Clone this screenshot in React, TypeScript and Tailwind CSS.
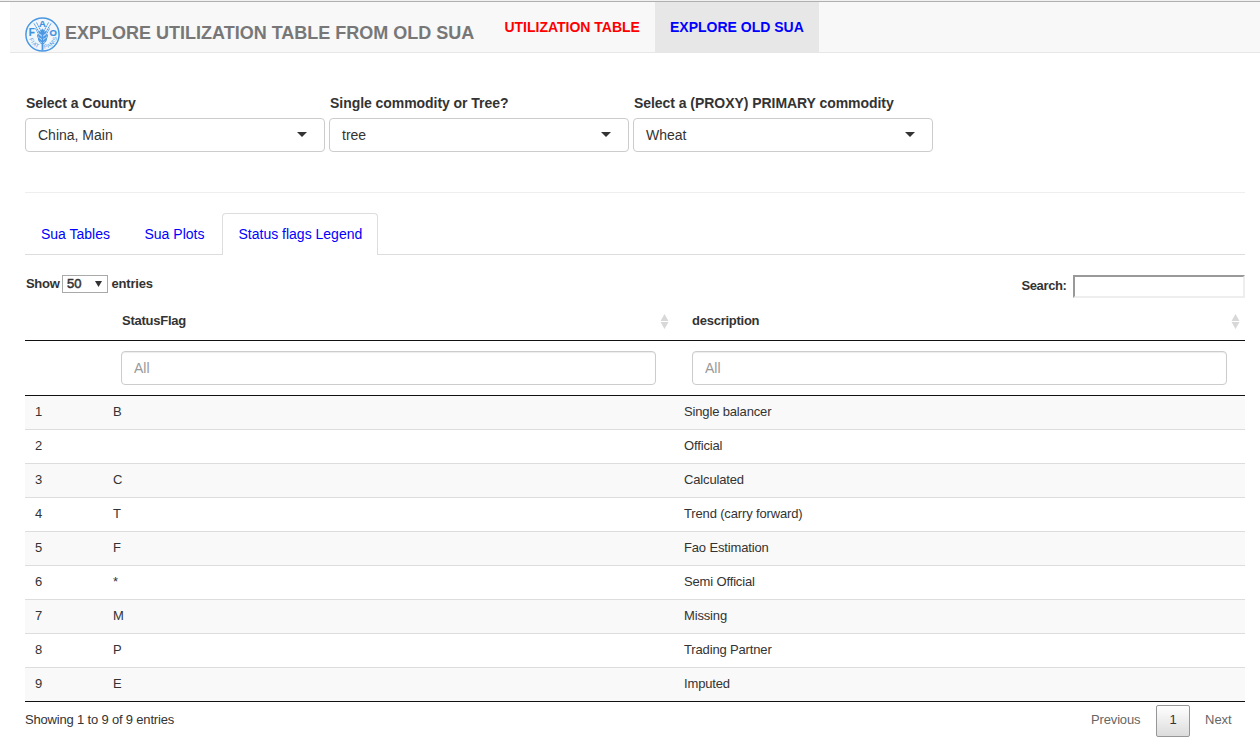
const rows: [string, string][] = [
  ['B', 'Single balancer'],
  ['', 'Official'],
  ['C', 'Calculated'],
  ['T', 'Trend (carry forward)'],
  ['F', 'Fao Estimation'],
  ['*', 'Semi Official'],
  ['M', 'Missing'],
  ['P', 'Trading Partner'],
  ['E', 'Imputed'],
];

const selects: [string, string][] = [
  ['Select a Country', 'China, Main'],
  ['Single commodity or Tree?', 'tree'],
  ['Select a (PROXY) PRIMARY commodity', 'Wheat'],
];

function Logo() {
  return (
    <svg width="36" height="36" viewBox="-0.500 -0.500 36 36" className="shrink-0 overflow-visible" fill="none" stroke="#4a98e3">
      <defs>
        <path id="motto-left" d="M4.600 22.500A14.200 14.200 0 0 0 16.500 32.200" />
        <path id="motto-right" d="M19.800 32.200A14.200 14.200 0 0 0 32.500 21" />
      </defs>
      <circle cx="18" cy="18" r="16.6" strokeWidth="1.5" fill="#f1f6fb" />
      <g strokeWidth="1">
        <path d="M9.500 7L15.500 17M12 6L16.500 14.500M26.500 7L20.500 17M24 6L19.500 14.500M11 12L14.500 18.500M25 12L21.500 18.500" strokeDasharray="1.6 .4" />
        <path d="M13 18C13 22 15 24 17 24.500M23 18C23 22 21 24 19 24.500M14 22C14 25 16 27 18 27.500C20 27 22 25 22 22" />
      </g>
      <path d="M18 12.500C15.500 14 15.500 16 18 18C20.500 16 20.500 14 18 12.500ZM17.500 18.500C14.500 17.500 14 15.500 14.300 14.500C16 15.500 17.500 16.500 17.500 18.500ZM18.500 18.500C21.500 17.500 22 15.500 21.700 14.500C20 15.500 18.500 16.500 18.500 18.500ZM17.500 22C14.500 21.500 13.500 19.500 13.700 18C16 19 17.500 20 17.500 22ZM18.500 22C21.500 21.500 22.500 19.500 22.300 18C20 19 18.500 20 18.500 22ZM17.500 25.500C15 25 13.800 23 14 21.500C16 22.500 17.500 23.500 17.500 25.500ZM18.500 25.500C21 25 22.200 23 22 21.500C20 22.500 18.500 23.500 18.500 25.500Z" fill="#4a98e3" strokeWidth="0.5" />
      <path d="M18 17V34" strokeWidth="1.8" />
      <g fill="#3f91e0" stroke="#3f91e0" strokeWidth="0.2" fontFamily="Liberation Sans, sans-serif" fontWeight="bold" textAnchor="middle">
        <text x="7.2" y="19.200" className="text-[10px]">F</text>
        <text x="18" y="10.500" className="text-[9.5px]">A</text>
        <text x="28.7" y="19" className="text-[9.5px]">O</text>
      </g>
      <g fill="#4a98e3" stroke="none" fontFamily="Liberation Sans, sans-serif" className="text-[5.5px] tracking-[0.5px]">
        <text><textPath href="#motto-left">FIAT</textPath></text>
        <text><textPath href="#motto-right">PANIS</textPath></text>
      </g>
    </svg>
  );
}

function SortIcon() {
  return (
    <svg width="9" height="15" viewBox="0 0 9 15" fill="#d8d8d8" className="mt-0.5">
      <path d="M4.500 0L8.500 7H.5ZM4.500 15L8.500 8H.5Z" />
    </svg>
  );
}

function Header({ label }: { label: string }) {
  return (
    <div className="flex items-center justify-between pl-[18px] pr-[5px]">
      <span className="pt-0.5 tracking-[-0.25px]">{label}</span>
      <SortIcon />
    </div>
  );
}

function Filter() {
  return (
    <div className="pl-[17px]">
      <input
        placeholder="All"
        className="block h-[34px] w-[535px] rounded border border-[#ccc] px-3 text-[14px] text-[#555] shadow-[inset_0_1px_1px_rgba(0,0,0,0.075)] placeholder:text-[#999]"
      />
    </div>
  );
}

export default function App() {
  return (
    <div className="h-[748px] overflow-hidden bg-white font-['Liberation_Sans',Arial,sans-serif] text-[14px] leading-5 text-[#333]">
      <div className="h-0.5 border-b border-[#b0b0b0] bg-[#f1f1f1]" />
      <nav className="ml-2.5 flex h-[51px] border-b border-[#e7e7e7] bg-[#f8f8f8]">
        <div className="flex w-[479px] items-start pl-3.5 pt-3.5">
          <Logo />
          <span className="ml-[5px] mt-[7px] whitespace-nowrap text-[18px] font-bold text-[#777]">EXPLORE UTILIZATION TABLE FROM OLD SUA</span>
        </div>
        <a className="w-[166px] whitespace-nowrap pl-[15.4px] pt-[15px] font-bold text-[#f00]">UTILIZATION TABLE</a>
        <a className="w-[164px] whitespace-nowrap bg-[#e7e7e7] pl-[15px] pt-[15px] font-bold text-[#00f]">EXPLORE OLD SUA</a>
      </nav>

      <main className="pl-[25px] pr-[15px]">
        <div className="flex gap-1 pt-10">
          {selects.map(([label, value]) => (
            <div key={label} className="w-[300px]">
              <div className="mb-[5px] whitespace-nowrap pl-px font-bold tracking-[-0.05px]">{label}</div>
              <div className="flex h-[34px] items-center justify-between rounded border border-[#ccc] pl-3 pr-[17px]">
                <span>{value}</span>
                <svg width="10" height="5" viewBox="0 0 10 5" fill="#333" className="-mt-0.5">
                  <path d="M0 0H10L5 5Z" />
                </svg>
              </div>
            </div>
          ))}
        </div>

        <hr className="mt-10 border-[#eee]" />

        <div className="mt-5 flex h-[42px] border-b border-[#ddd] text-[#00f]">
          <a className="w-[103px] pl-4 pt-[11px]">Sua Tables</a>
          <a className="w-[94px] pl-[16.5px] pt-[11px]">Sua Plots</a>
          <a className="h-[42px] w-[156px] rounded-t border border-b-0 border-[#ddd] bg-white pl-[15.5px] pt-2.5">Status flags Legend</a>
        </div>

        <div className="flex h-[45px] justify-between text-[13px] font-bold">
          <div className="flex h-5 pl-px pt-[19px] tracking-[-0.3px]">
            <span className="w-9">Show</span>
            <div className="mt-px flex h-[18px] w-[46px] shrink-0 items-center justify-between border border-[#a9a9a9] pl-1 pr-[5px]">
              <span className="text-[13px] font-normal leading-4 tracking-normal [-webkit-text-stroke:0.5px_#333]">50</span>
              <svg width="7" height="6" viewBox="0 0 7 6" fill="#333"><path d="M0 0H7L3.500 6Z" /></svg>
            </div>
            <span className="ml-[3.5px] tracking-[-0.2px]">entries</span>
          </div>
          <div className="flex pt-5">
            <span className="mr-[6.5px] mt-px tracking-[-0.38px]">Search:</span>
            <input className="h-[23px] w-[172px] border-2 border-b-[#eee] border-l-[#999] border-r-[#eee] border-t-[#999]" />
          </div>
        </div>

        <div className="text-[13px]">
          <div className="grid h-[41px] grid-cols-[79px_570px_571px] items-center border-b border-[#111] font-bold">
            <span />
            <Header label="StatusFlag" />
            <Header label="description" />
          </div>
          <div className="grid h-[55px] grid-cols-[79px_571px_570px] items-center border-b border-[#111]">
            <span />
            <Filter />
            <Filter />
          </div>
          <div className="border-b border-[#111] tracking-[-0.15px]">
            {rows.map(([flag, description], i) => (
              <div
                key={i}
                className="grid h-[34px] grid-cols-[79px_571px_570px] border-b border-[#ddd] pt-1.5 odd:bg-[#f9f9f9] last:h-[33px] last:border-b-0"
              >
                <span className="pl-2.5">{i + 1}</span>
                <span className="pl-[9px]">{flag}</span>
                <span className="pl-[9px]">{description}</span>
              </div>
            ))}
          </div>
          <div className="flex justify-between">
            <span className="pt-2 tracking-[-0.18px]">Showing 1 to 9 of 9 entries</span>
            <div className="flex pt-[3px] text-[#666]">
              <span className="w-[65px] pt-[5px] tracking-[-0.15px]">Previous</span>
              <span className="h-8 w-[34px] rounded-xs border border-[#979797] bg-linear-to-b from-white to-[#dcdcdc] pt-1 text-center text-[#333]">1</span>
              <span className="w-[55px] pl-[15px] pt-[5px]">Next</span>
            </div>
          </div>
        </div>
      </main>
    </div>
  );
}
